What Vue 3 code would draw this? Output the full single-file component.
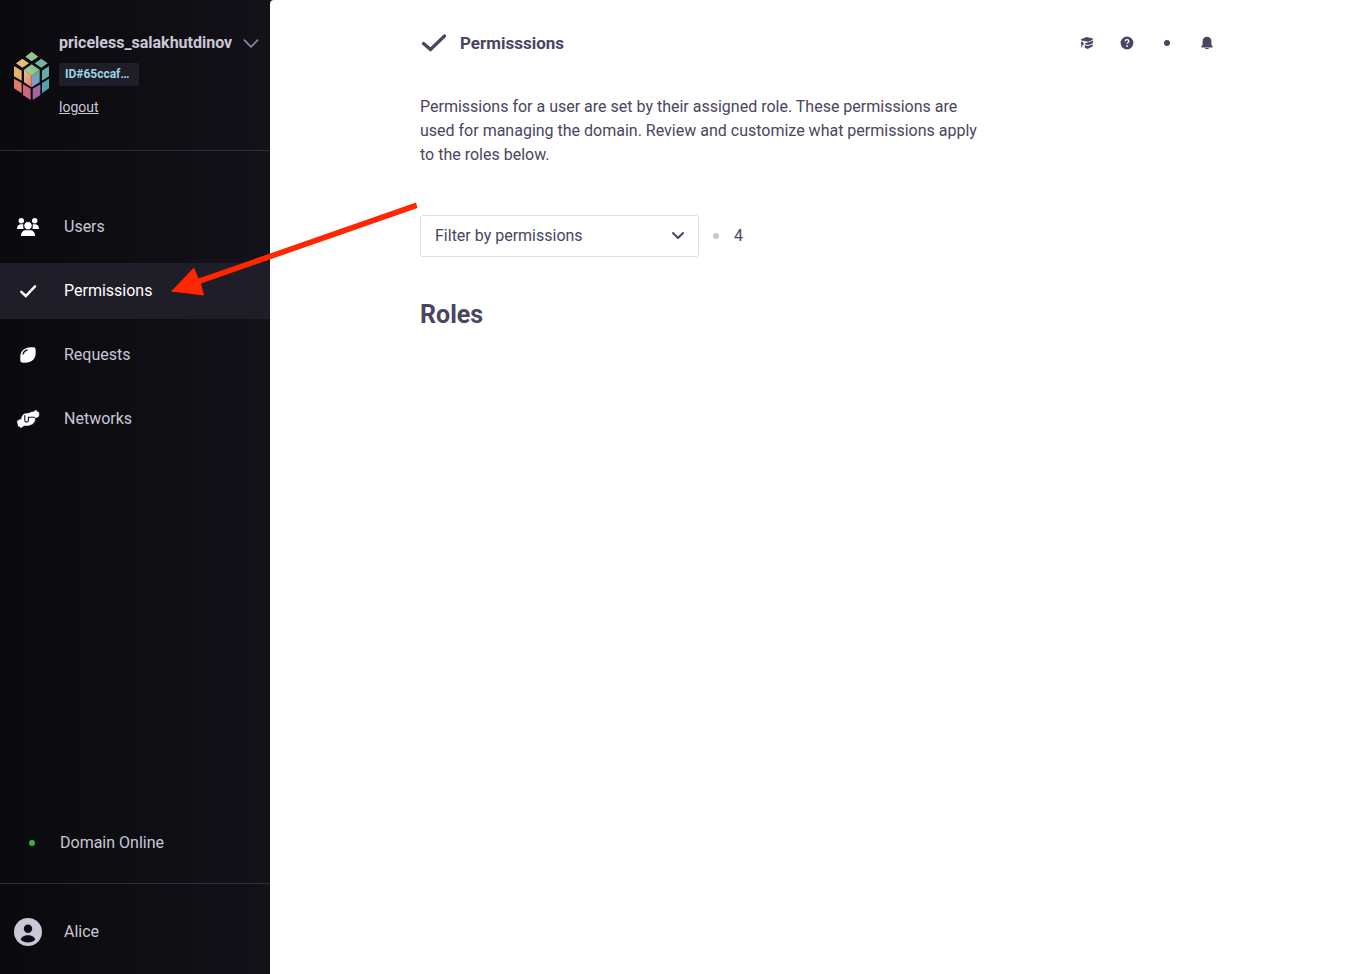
<script setup>
import { ref } from 'vue'

const active = ref('Permissions')
const items = ['Users', 'Permissions', 'Requests', 'Networks']
const filter = ref('')
</script>

<template>
  <div class="app">
    <aside class="sidebar">
      <header class="domain">
        <svg class="logo" viewBox="39 30 111 150" aria-hidden="true">
          <defs>
            <linearGradient id="coreTop" x1="0" y1="1" x2="1" y2="0">
              <stop offset="0" stop-color="#c9d089" />
              <stop offset="1" stop-color="#62bd8c" />
            </linearGradient>
            <linearGradient id="coreLeft" x1="0" y1="0" x2="0.6" y2="1">
              <stop offset="0" stop-color="#d9cf85" />
              <stop offset="1" stop-color="#ee7f6c" />
            </linearGradient>
            <linearGradient id="coreRight" x1="0" y1="1" x2="1" y2="0">
              <stop offset="0" stop-color="#a98cc0" />
              <stop offset="0.6" stop-color="#62a9cb" />
              <stop offset="1" stop-color="#58b9a4" />
            </linearGradient>
          </defs>
          <path fill="#93c58f" d="M95 32 115 47 95 61 76 47z" />
          <path fill="#e6bd73" d="M67 53 87 67 67 80 48 67z" />
          <path fill="#74b69e" d="M124 53 143 67 124 80 104 67z" />
          <path fill="#e8b16c" d="M42 75 65 89V119L42 106z" />
          <path fill="#64aaa5" d="M147 75 126 89V119L147 106z" />
          <path fill="#e1796a" d="M42 113 65 126V157L42 142z" />
          <path fill="#559fae" d="M147 113 126 126V157L147 142z" />
          <path fill="#cc647d" d="M69 130 92 143V177L69 162z" />
          <path fill="#9c68a0" d="M121 130 98 143V177L121 162z" />
          <path fill="url(#coreTop)" d="M95 70 119 86 95 104 72 86z" />
          <path fill="url(#coreLeft)" d="M72 86 95 104V139L72 124z" />
          <path fill="url(#coreRight)" d="M119 86 95 104V139L119 124z" />
        </svg>
        <div class="identity">
          <button class="name" type="button">
            <span>priceless_salakhutdinov</span>
            <svg class="caret" viewBox="0 0 16 10" aria-hidden="true">
              <path d="M2 2 8 8 14 2" fill="none" stroke="currentColor" stroke-width="1.500" stroke-linecap="round" stroke-linejoin="round" />
            </svg>
          </button>
          <span class="tag">ID#65ccaf…</span>
          <a class="logout" href="#">logout</a>
        </div>
      </header>

      <nav class="nav">
        <a
          v-for="item in items"
          :key="item"
          href="#"
          :class="['nav-item', { active: item === active }]"
          @click.prevent="active = item"
        >
          <svg v-if="item === 'Users'" class="icon" viewBox="0 0 24 24" aria-hidden="true">
            <g fill="currentColor">
              <circle cx="5.300" cy="5.800" r="2.700" />
              <circle cx="18.700" cy="5.800" r="2.700" />
              <path d="M1 14c0-3 1.500-4.700 4-4.700h2.500V14zM23 14c0-3-1.500-4.700-4-4.700h-2.500V14z" />
              <circle cx="12" cy="10.700" r="4.200" stroke="#0d0c12" stroke-width="1" />
              <path d="M5 21c0-3.800 2-5.800 5-5.800h4c3 0 5 2 5 5.800z" />
            </g>
          </svg>
          <svg v-else-if="item === 'Permissions'" class="icon" viewBox="0 0 24 24" aria-hidden="true">
            <path d="M5.300 12.800 9.800 17 19 7.300" fill="none" stroke="currentColor" stroke-width="2.500" stroke-linecap="round" stroke-linejoin="miter" />
          </svg>
          <svg v-else-if="item === 'Requests'" class="icon" viewBox="0 0 24 24" aria-hidden="true">
            <path fill="currentColor" d="M13 4.500C15 4.200 17.500 4 18.700 4.700 20 5.500 19.800 8 19.600 11 19.300 15.500 16 19 11.500 19.400 9 19.600 6.500 20 5.200 19.300 4 18.500 4.200 16 4.300 13.500 4.500 8.500 8 5 13 4.500z" />
            <path d="M7 11.200c.5-2.200 2-3.700 4.200-4.300" fill="none" stroke="#0d0c12" stroke-width="1.200" stroke-linecap="round" />
          </svg>
          <svg v-else class="icon" viewBox="0 0 24 24" aria-hidden="true">
            <path fill="currentColor" stroke="currentColor" stroke-width=".5" stroke-linejoin="round" d="M1.300 14 4.500 12.300H5.500L6 9.500 8 7 13 6.200 16 5H18L18.500 4 20.300 3.300 21 4.800 22.700 5.200 23 8 22 10 19.800 10.600 18.800 11.500V14L16.500 17 12.500 18.500H8L7 19.500 4.800 20.700 3.900 19.500 2.300 19.200z" />
            <path d="M8.800 8.500v4.800a1.800 1.800 0 0 0 3.600 0V10.200H18.500" fill="none" stroke="#0d0c12" stroke-width="1.100" stroke-linecap="round" stroke-linejoin="round" />
          </svg>
          <span>{{ item }}</span>
        </a>
      </nav>

      <div class="status"><i class="online"></i><span>Domain Online</span></div>
      <footer class="account">
        <svg class="avatar" viewBox="0 0 28 28" aria-hidden="true">
          <circle cx="14" cy="14" r="14" fill="#cac7d6" />
          <circle cx="14" cy="10.800" r="4.200" fill="#0d0c12" />
          <path d="M6.700 21.800c.6-2.900 3.500-4.500 7.300-4.500s6.700 1.600 7.300 4.500c-1.900 1.800-4.400 2.800-7.300 2.800s-5.400-1-7.300-2.800z" fill="#0d0c12" />
        </svg>
        <span>Alice</span>
      </footer>
    </aside>

    <main class="main">
      <div class="content">
        <header class="topbar">
          <svg class="title-icon" viewBox="0 0 28 24" aria-hidden="true">
            <path d="M3.500 12.500 10.500 18.500 24.500 5" fill="none" stroke="currentColor" stroke-width="3.300" stroke-linecap="round" stroke-linejoin="miter" />
          </svg>
          <h1>Permisssions</h1>
          <div class="actions">
            <button type="button" aria-label="Courses">
              <svg viewBox="0 0 16 16" aria-hidden="true">
                <path fill="currentColor" d="M2 4.200 7.500 2 14 3.500 13.500 5 9 6.800 2.200 5.600zM2 6.500l2.500.5-.8 1.300L5 8.600l-.6 1.600-.8-.3-.7 2.700-.9-.3.600-2.800L2 9zM6 8.200 8.500 7.500 14 5.800V8.200L9 10 5.800 9.300zM6 10.200 9 10.900 13.500 9.200V11.500L8.500 14 5.500 12.500z" />
              </svg>
            </button>
            <button type="button" aria-label="Help">
              <svg viewBox="0 0 16 16" aria-hidden="true">
                <circle cx="8" cy="8" r="6.400" fill="currentColor" />
                <path d="M6.200 6.300C6.300 5.100 7 4.600 8 4.600s1.800.6 1.800 1.600c0 1.300-1.700 1.300-1.700 2.600" fill="none" stroke="#fff" stroke-width="1.400" />
                <circle cx="8.100" cy="11" r=".9" fill="#fff" />
              </svg>
            </button>
            <button type="button" aria-label="Status">
              <svg viewBox="0 0 16 16" aria-hidden="true"><circle cx="8" cy="8" r="3" fill="currentColor" /></svg>
            </button>
            <button type="button" aria-label="Notifications">
              <svg viewBox="0 0 16 16" aria-hidden="true">
                <path fill="currentColor" d="M8 1.800c2.600 0 4.400 1.900 4.400 4.500v3.300L13.700 12v.5H2.300V12l1.300-2.400V6.300C3.600 3.700 5.400 1.800 8 1.800zM6 13.100h4c-.3.800-1 1.200-2 1.200s-1.700-.4-2-1.200z" />
              </svg>
            </button>
          </div>
        </header>

        <p class="intro">
          Permissions for a user are set by their assigned role. These permissions are used for managing the domain. Review and customize what permissions apply to the roles below.
        </p>

        <div class="filters">
          <div class="select">
            <select v-model="filter" aria-label="Filter by permissions">
              <option value="">Filter by permissions</option>
            </select>
            <svg class="chevron" viewBox="0 0 14 10" aria-hidden="true">
              <path d="M2 2 7 7 12 2" fill="none" stroke="currentColor" stroke-width="2" stroke-linecap="round" stroke-linejoin="round" />
            </svg>
          </div>
          <i class="dot"></i>
          <span>4</span>
        </div>

        <h2>Roles</h2>
      </div>
    </main>

    <svg class="pointer" viewBox="0 0 248 96" aria-hidden="true">
      <path fill="#ff2600" d="M246 1.500 247.500 7 31 82.500 34 94.500 1 90.500 24 66.500 28.500 77.500z" />
    </svg>
  </div>
</template>

<style>
body {
  margin: 0;
}
</style>

<style scoped>
.app {
  position: relative;
  display: flex;
  min-height: 100vh;
  background: #131218;
  color: #4a4560;
  font: 16px/24px Roboto, "Liberation Sans", sans-serif;
}
button {
  padding: 0;
  border: 0;
  background: none;
  color: inherit;
  font: inherit;
  cursor: pointer;
}
.sidebar {
  display: flex;
  flex: none;
  flex-direction: column;
  box-sizing: border-box;
  width: 270px;
  background: linear-gradient(90deg, #0a090e, #131218);
  color: #cac7d6;
}
.domain {
  display: flex;
  align-items: center;
  gap: 9px;
  padding: 32px 10px 31px 13px;
  border-bottom: 1px solid #2e2b3b;
}
.logo {
  flex: none;
  width: 37px;
  height: 50px;
}
.identity {
  display: flex;
  flex: 1;
  flex-direction: column;
  align-items: flex-start;
  gap: 9px;
}
.name {
  display: flex;
  align-items: center;
  justify-content: space-between;
  width: 100%;
  font-weight: 700;
  line-height: 22px;
}
.caret {
  width: 18px;
  height: 11px;
  color: #8d87a5;
}
.tag {
  box-sizing: border-box;
  width: 80px;
  padding: 0 6px;
  border-radius: 2px;
  background: #1f1d28;
  color: #96d7e8;
  font-size: 12px;
  font-weight: 700;
  line-height: 23px;
}
.logout {
  color: inherit;
  font-size: 14px;
}
.nav {
  display: flex;
  flex: 1;
  flex-direction: column;
  gap: 8px;
  padding-top: 48px;
}
.nav-item {
  display: flex;
  align-items: center;
  gap: 24px;
  height: 56px;
  padding: 0 16px;
  color: inherit;
  text-decoration: none;
}
.nav-item.active {
  background: #1f1d28;
  color: #fff;
}
.icon {
  width: 24px;
  height: 24px;
  color: #fff;
}
.status {
  display: flex;
  align-items: center;
  gap: 25px;
  padding: 0 29px 28px;
}
.online {
  width: 6px;
  height: 6px;
  border-radius: 50%;
  background: #35b533;
}
.account {
  display: flex;
  align-items: center;
  gap: 22px;
  padding: 34px 14px 28px;
  border-top: 1px solid #2e2b3b;
}
.avatar {
  width: 28px;
  height: 28px;
}
.main {
  flex: 1;
  padding: 31px 130px 30px 150px;
  border-top-left-radius: 4px;
  background: #fff;
}
.topbar {
  display: flex;
  align-items: center;
}
.title-icon {
  width: 28px;
  height: 24px;
  margin-right: 12px;
}
h1,
h2 {
  margin: 0;
  font-weight: 700;
}
h1 {
  font-size: 17px;
  line-height: 24px;
}
h2 {
  font-size: 25px;
  line-height: 32px;
}
.actions {
  display: flex;
  gap: 24px;
  margin-left: auto;
}
.actions button,
.actions svg {
  display: block;
  width: 16px;
  height: 16px;
}
.intro {
  max-width: 560px;
  margin: 40px 0 48px;
}
.filters {
  display: flex;
  align-items: center;
  margin-bottom: 42px;
}
.select {
  display: grid;
  align-items: center;
  width: 279px;
  margin-right: 14px;
}
.select > * {
  grid-area: 1 / 1;
}
select {
  height: 42px;
  padding: 0 14px;
  border: 1px solid #e0dfe7;
  border-radius: 3px;
  background: #fff;
  color: inherit;
  font: inherit;
  appearance: none;
}
.chevron {
  justify-self: end;
  width: 14px;
  height: 10px;
  margin-right: 14px;
  pointer-events: none;
}
.dot {
  width: 6px;
  height: 6px;
  margin-right: 15px;
  border-radius: 50%;
  background: #c8c5d6;
}
.pointer {
  position: absolute;
  top: 201px;
  left: 170px;
  width: 248px;
  height: 96px;
  pointer-events: none;
}
</style>
